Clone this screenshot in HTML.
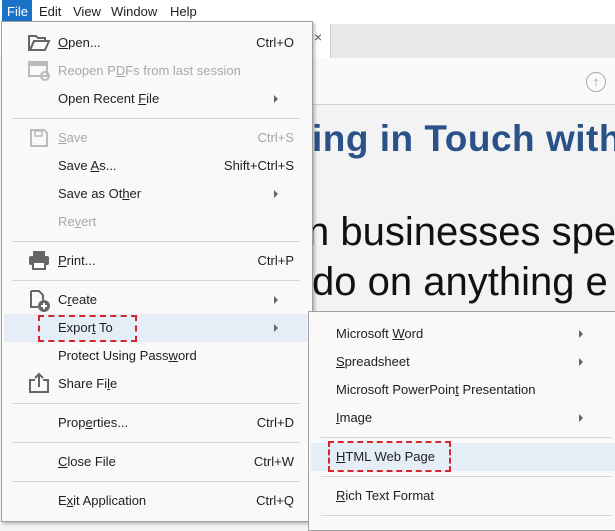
<!DOCTYPE html>
<html><head><style>
*{margin:0;padding:0;box-sizing:border-box}
body{width:615px;height:525px;overflow:hidden;background:#f3f3f3;font-family:"Liberation Sans",sans-serif;font-size:13px;color:#1e1e1e;position:relative}
.a{position:absolute;white-space:nowrap}
.mb{left:0;top:0;width:615px;height:22px;background:#fff}
.mb span{position:absolute;top:4px}
.it{position:absolute;left:58px;line-height:16px}
.sc{position:absolute;right:18px;line-height:16px}
.ar{position:absolute;left:274px;width:0;height:0;border-left:4px solid #666;border-top:4px solid transparent;border-bottom:4px solid transparent}
.dis{color:#a8a8a8}
.sep{position:absolute;left:12px;width:288px;height:1px;background:#d5d5d5}
u{text-decoration:underline}
</style></head><body>
<!-- document area -->
<div class="a" style="left:0;top:22px;width:615px;height:36px;background:#fff"></div>
<div class="a" style="left:330px;top:24px;width:285px;height:35px;background:#e9e9e9;border-left:1px solid #ccc;border-bottom:1px solid #ccc"></div>
<div class="a" style="left:314px;top:29px;font-size:14px;color:#555">×</div>
<div class="a" style="left:312px;top:58px;width:303px;height:47px;background:#fafafa;border-bottom:1px solid #cfcfcf"></div>
<div class="a" style="left:586px;top:72px;width:20px;height:20px;border:1.5px solid #aaa;border-radius:50%;color:#999;font-size:13px;text-align:center;line-height:17px">↑</div>
<div class="a" style="left:312px;top:118px;font-size:37px;color:#2a5289;font-weight:bold;letter-spacing:0.5px">ing in Touch with</div>
<div class="a" style="left:307px;top:210px;font-size:40px;color:#111">n businesses spe</div>
<div class="a" style="left:312px;top:260px;font-size:40px;color:#111">do on anything e</div>

<!-- menubar -->
<div class="a mb">
<div class="a" style="left:2px;top:0;width:30px;height:22px;background:#1a73c6"></div>
<span style="left:7px;color:#fff">File</span>
<span style="left:39px">Edit</span>
<span style="left:73px">View</span>
<span style="left:111px">Window</span>
<span style="left:170px">Help</span>
</div>

<!-- main menu -->
<div class="a" style="left:1px;top:21px;width:312px;height:501px;background:#f9f9f9;border:1px solid #a0a0a0;box-shadow:2px 2px 3px rgba(0,0,0,.25)">
<div style="position:absolute;left:-2px;top:-22px;width:312px;height:524px">
<svg class="a" style="left:27px;top:33px" width="24" height="20" viewBox="0 0 24 20"><path d="M2 3h7l2 2h7v3H7L3 17H2z" fill="none" stroke="#666" stroke-width="2"/><path d="M3 17L7 8h15l-4 9z" fill="none" stroke="#666" stroke-width="2"/></svg>
<svg class="a" style="left:27px;top:60px" width="24" height="22" viewBox="0 0 24 22"><rect x="2" y="2" width="18" height="14" fill="none" stroke="#bbb" stroke-width="2"/><rect x="2" y="2" width="18" height="4" fill="#bbb"/><circle cx="18" cy="16" r="4" fill="none" stroke="#bbb" stroke-width="2"/></svg>
<svg class="a" style="left:29px;top:128px" width="20" height="20" viewBox="0 0 20 20"><path d="M2 2h13l3 3v13H2z" fill="none" stroke="#bbb" stroke-width="2"/><rect x="6" y="3" width="7" height="5" fill="none" stroke="#bbb" stroke-width="1.5"/></svg>
<svg class="a" style="left:28px;top:250px" width="22" height="20" viewBox="0 0 22 20"><rect x="5" y="1" width="12" height="5" fill="#666"/><rect x="1" y="6" width="20" height="9" rx="2" fill="#666"/><rect x="5" y="12" width="12" height="7" fill="#fff" stroke="#666" stroke-width="2"/></svg>
<svg class="a" style="left:28px;top:289px" width="24" height="24" viewBox="0 0 24 24"><path d="M3 2h8l4 4v5M3 2v16h7" fill="none" stroke="#666" stroke-width="2"/><circle cx="16" cy="17" r="6" fill="#666"/><path d="M16 14v6M13 17h6" stroke="#fff" stroke-width="2"/></svg>
<svg class="a" style="left:28px;top:372px" width="22" height="22" viewBox="0 0 22 22"><path d="M7 8H2v12h18V8h-5" fill="none" stroke="#666" stroke-width="2"/><path d="M11 15V2M7 6l4-4 4 4" fill="none" stroke="#666" stroke-width="2"/></svg>

<div class="it" style="top:35px"><u>O</u>pen...</div><div class="sc" style="top:35px">Ctrl+O</div>
<div class="it dis" style="top:63px">Reopen P<u>D</u>Fs from last session</div>
<div class="it" style="top:91px">Open Recent <u>F</u>ile</div><div class="ar" style="top:95px"></div>
<div class="sep" style="top:118px"></div>
<div class="it dis" style="top:130px"><u>S</u>ave</div><div class="sc dis" style="top:130px">Ctrl+S</div>
<div class="it" style="top:158px">Save <u>A</u>s...</div><div class="sc" style="top:158px">Shift+Ctrl+S</div>
<div class="it" style="top:186px">Save as Ot<u>h</u>er</div><div class="ar" style="top:190px"></div>
<div class="it dis" style="top:214px">Re<u>v</u>ert</div>
<div class="sep" style="top:241px"></div>
<div class="it" style="top:253px"><u>P</u>rint...</div><div class="sc" style="top:253px">Ctrl+P</div>
<div class="sep" style="top:280px"></div>
<div class="it" style="top:292px">C<u>r</u>eate</div><div class="ar" style="top:296px"></div>
<div class="a" style="left:4px;top:314px;width:303px;height:28px;background:#e5edf7"></div>
<div class="a" style="left:38px;top:315px;width:99px;height:27px;border:2px dashed #d7262b"></div>
<div class="it" style="top:320px">Expor<u>t</u> To</div><div class="ar" style="top:324px"></div>
<div class="it" style="top:348px">Protect Using Pass<u>w</u>ord</div>
<div class="it" style="top:376px">Share Fi<u>l</u>e</div>
<div class="sep" style="top:403px"></div>
<div class="it" style="top:415px">Prop<u>e</u>rties...</div><div class="sc" style="top:415px">Ctrl+D</div>
<div class="sep" style="top:442px"></div>
<div class="it" style="top:454px"><u>C</u>lose File</div><div class="sc" style="top:454px">Ctrl+W</div>
<div class="sep" style="top:481px"></div>
<div class="it" style="top:493px">E<u>x</u>it Application</div><div class="sc" style="top:493px">Ctrl+Q</div>
</div></div>

<!-- submenu -->
<div class="a" style="left:308px;top:311px;width:310px;height:220px;background:#f9f9f9;border:1px solid #a0a0a0">
<div class="a" style="left:27px;top:14px">Microsoft <u>W</u>ord</div><div class="a" style="left:270px;top:18px;border-left:4px solid #666;border-top:4px solid transparent;border-bottom:4px solid transparent"></div>
<div class="a" style="left:27px;top:42px"><u>S</u>preadsheet</div><div class="a" style="left:270px;top:46px;border-left:4px solid #666;border-top:4px solid transparent;border-bottom:4px solid transparent"></div>
<div class="a" style="left:27px;top:70px">Microsoft PowerPoin<u>t</u> Presentation</div>
<div class="a" style="left:27px;top:98px"><u>I</u>mage</div><div class="a" style="left:270px;top:102px;border-left:4px solid #666;border-top:4px solid transparent;border-bottom:4px solid transparent"></div>
<div class="a" style="left:12px;top:125px;width:290px;height:1px;background:#d5d5d5"></div>
<div class="a" style="left:2px;top:131px;width:306px;height:28px;background:#e5edf7"></div>
<div class="a" style="left:19px;top:129px;width:123px;height:31px;border:2px dashed #d7262b"></div>
<div class="a" style="left:27px;top:137px"><u>H</u>TML Web Page</div>
<div class="a" style="left:12px;top:164px;width:290px;height:1px;background:#d5d5d5"></div>
<div class="a" style="left:27px;top:176px"><u>R</u>ich Text Format</div>
<div class="a" style="left:12px;top:203px;width:290px;height:1px;background:#d5d5d5"></div>
</div>
</body></html>
